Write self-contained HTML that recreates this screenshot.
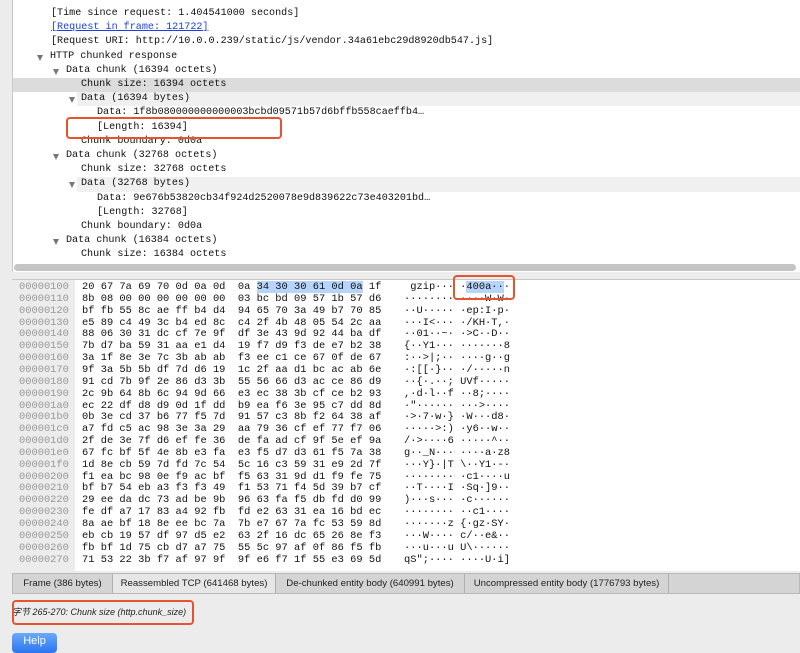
<!DOCTYPE html>
<html><head><meta charset="utf-8"><style>
*{margin:0;padding:0;box-sizing:border-box}
body{width:800px;height:646px;background:#ececec;position:relative;overflow:hidden;font-family:"Liberation Sans","Noto Sans CJK SC",sans-serif}
#tree{position:absolute;left:12px;top:0;width:788px;height:272px;background:#fff;border-left:1px solid #c8c8c8}
.r{position:absolute;left:0;width:788px;height:14.2px;font:10.1px/14.2px "Liberation Mono",monospace;color:#111;white-space:pre}
.r span.t{position:absolute;top:0}
.tri{position:absolute;top:5px;width:0;height:0;border-left:3.5px solid transparent;border-right:3.5px solid transparent;border-top:6px solid #777}
a{color:#1a3fe0;text-decoration:underline}
#hs{position:absolute;left:14px;top:264px;width:782px;height:7px;background:#c4c4c4;border-radius:4px}
#hex{position:absolute;left:12px;top:279px;width:788px;height:292px;background:#fff;border-top:1px solid #c8c8c8}
#off{position:absolute;left:0;top:0;width:63px;height:292px;background:#ececec}
.h{position:absolute;left:0;height:11.85px;font:10.4px/11.85px "Liberation Mono",monospace;white-space:pre;color:#111}
.h .o{position:absolute;left:7px;color:#999}
.h .x{position:absolute;left:70px}
.h .a{position:absolute;left:392px}
.hl{background:#b7d5fb}
.box{position:absolute;border:2px solid #e6532f;border-radius:4px}
#tabs{position:absolute;left:12px;top:573px;width:788px;height:21px;background:#d4d4d4;border:1px solid #b8b8b8}
.tab{position:absolute;top:0;height:19px;font-size:9.6px;line-height:19px;text-align:center;color:#222;border-right:1px solid #b0b0b0;white-space:nowrap;overflow:hidden}
#help{position:absolute;left:12px;top:633px;width:45px;height:20px;border-radius:4px;background:linear-gradient(#6aa9fb,#2a74ee);color:#fff;font-size:11px;text-align:center;line-height:17px}
</style></head><body>
<div id="tree">
<div class="r" style="top:7px"><span class="t" style="left:38px">[Time since request: 1.404541000 seconds]</span></div>
<div class="r" style="top:21.2px"><span class="t" style="left:38px"><a>[Request in frame: 121722]</a></span></div>
<div class="r" style="top:35.4px"><span class="t" style="left:38px">[Request URI: http://10.0.0.239/static/js/vendor.34a61ebc29d8920db547.js]</span></div>
<div class="r" style="top:49.6px"><i class="tri" style="left:24px"></i><span class="t" style="left:37px">HTTP chunked response</span></div>
<div class="r" style="top:63.8px"><i class="tri" style="left:40px"></i><span class="t" style="left:53px">Data chunk (16394 octets)</span></div>
<div class="r" style="top:78px;background:#dcdcdc"><span class="t" style="left:68px">Chunk size: 16394 octets</span></div>
<div class="r" style="top:92.2px"><div style="position:absolute;left:64px;top:0;width:724px;height:14.2px;background:#f0f0f0"></div><i class="tri" style="left:56px"></i><span class="t" style="left:68px">Data (16394 bytes)</span></div>
<div class="r" style="top:106.4px"><span class="t" style="left:84px">Data: 1f8b080000000000003bcbd09571b57d6bffb558caeffb4…</span></div>
<div class="r" style="top:120.6px"><span class="t" style="left:84px">[Length: 16394]</span></div>
<div class="r" style="top:134.8px"><span class="t" style="left:68px">Chunk boundary: 0d0a</span></div>
<div class="r" style="top:149px"><i class="tri" style="left:40px"></i><span class="t" style="left:53px">Data chunk (32768 octets)</span></div>
<div class="r" style="top:163.2px"><span class="t" style="left:68px">Chunk size: 32768 octets</span></div>
<div class="r" style="top:177.4px"><div style="position:absolute;left:64px;top:0;width:724px;height:14.2px;background:#f0f0f0"></div><i class="tri" style="left:56px"></i><span class="t" style="left:68px">Data (32768 bytes)</span></div>
<div class="r" style="top:191.6px"><span class="t" style="left:84px">Data: 9e676b53820cb34f924d2520078e9d839622c73e403201bd…</span></div>
<div class="r" style="top:205.8px"><span class="t" style="left:84px">[Length: 32768]</span></div>
<div class="r" style="top:220px"><span class="t" style="left:68px">Chunk boundary: 0d0a</span></div>
<div class="r" style="top:234.2px"><i class="tri" style="left:40px"></i><span class="t" style="left:53px">Data chunk (16384 octets)</span></div>
<div class="r" style="top:248.4px"><span class="t" style="left:68px">Chunk size: 16384 octets</span></div>
</div>
<div id="hs"></div>
<div id="hex"><div id="off"></div>
<div class="h" style="top:2px"><span class="o">00000100</span><span class="x">20 67 7a 69 70 0d 0a 0d  0a <span class="hl">34 30 30 61 0d 0a</span> 1f</span><span class="a"> gzip··· ·<span class="hl">400a··</span>·</span></div>
<div class="h" style="top:13.85px"><span class="o">00000110</span><span class="x">8b 08 00 00 00 00 00 00  03 bc bd 09 57 1b 57 d6</span><span class="a">········ ····W·W·</span></div>
<div class="h" style="top:25.7px"><span class="o">00000120</span><span class="x">bf fb 55 8c ae ff b4 d4  94 65 70 3a 49 b7 70 85</span><span class="a">··U····· ·ep:I·p·</span></div>
<div class="h" style="top:37.55px"><span class="o">00000130</span><span class="x">e5 89 c4 49 3c b4 ed 8c  c4 2f 4b 48 05 54 2c aa</span><span class="a">···I<··· ·/KH·T,·</span></div>
<div class="h" style="top:49.4px"><span class="o">00000140</span><span class="x">88 06 30 31 dc cf 7e 9f  df 3e 43 9d 92 44 ba df</span><span class="a">··01··~· ·>C··D··</span></div>
<div class="h" style="top:61.25px"><span class="o">00000150</span><span class="x">7b d7 ba 59 31 aa e1 d4  19 f7 d9 f3 de e7 b2 38</span><span class="a">{··Y1··· ·······8</span></div>
<div class="h" style="top:73.1px"><span class="o">00000160</span><span class="x">3a 1f 8e 3e 7c 3b ab ab  f3 ee c1 ce 67 0f de 67</span><span class="a">:··>|;·· ····g··g</span></div>
<div class="h" style="top:84.95px"><span class="o">00000170</span><span class="x">9f 3a 5b 5b df 7d d6 19  1c 2f aa d1 bc ac ab 6e</span><span class="a">·:[[·}·· ·/·····n</span></div>
<div class="h" style="top:96.8px"><span class="o">00000180</span><span class="x">91 cd 7b 9f 2e 86 d3 3b  55 56 66 d3 ac ce 86 d9</span><span class="a">··{·.··; UVf·····</span></div>
<div class="h" style="top:108.65px"><span class="o">00000190</span><span class="x">2c 9b 64 8b 6c 94 9d 66  e3 ec 38 3b cf ce b2 93</span><span class="a">,·d·l··f ··8;····</span></div>
<div class="h" style="top:120.5px"><span class="o">000001a0</span><span class="x">ec 22 df d8 d9 0d 1f dd  b9 ea f6 3e 95 c7 dd 8d</span><span class="a">·"······ ···>····</span></div>
<div class="h" style="top:132.35px"><span class="o">000001b0</span><span class="x">0b 3e cd 37 b6 77 f5 7d  91 57 c3 8b f2 64 38 af</span><span class="a">·>·7·w·} ·W···d8·</span></div>
<div class="h" style="top:144.2px"><span class="o">000001c0</span><span class="x">a7 fd c5 ac 98 3e 3a 29  aa 79 36 cf ef 77 f7 06</span><span class="a">·····>:) ·y6··w··</span></div>
<div class="h" style="top:156.05px"><span class="o">000001d0</span><span class="x">2f de 3e 7f d6 ef fe 36  de fa ad cf 9f 5e ef 9a</span><span class="a">/·>····6 ·····^··</span></div>
<div class="h" style="top:167.9px"><span class="o">000001e0</span><span class="x">67 fc bf 5f 4e 8b e3 fa  e3 f5 d7 d3 61 f5 7a 38</span><span class="a">g··_N··· ····a·z8</span></div>
<div class="h" style="top:179.75px"><span class="o">000001f0</span><span class="x">1d 8e cb 59 7d fd 7c 54  5c 16 c3 59 31 e9 2d 7f</span><span class="a">···Y}·|T \··Y1·-·</span></div>
<div class="h" style="top:191.6px"><span class="o">00000200</span><span class="x">f1 ea bc 98 0e f9 ac bf  f5 63 31 9d d1 f9 fe 75</span><span class="a">········ ·c1····u</span></div>
<div class="h" style="top:203.45px"><span class="o">00000210</span><span class="x">bf b7 54 eb a3 f3 f3 49  f1 53 71 f4 5d 39 b7 cf</span><span class="a">··T····I ·Sq·]9··</span></div>
<div class="h" style="top:215.3px"><span class="o">00000220</span><span class="x">29 ee da dc 73 ad be 9b  96 63 fa f5 db fd d0 99</span><span class="a">)···s··· ·c······</span></div>
<div class="h" style="top:227.15px"><span class="o">00000230</span><span class="x">fe df a7 17 83 a4 92 fb  fd e2 63 31 ea 16 bd ec</span><span class="a">········ ··c1····</span></div>
<div class="h" style="top:239px"><span class="o">00000240</span><span class="x">8a ae bf 18 8e ee bc 7a  7b e7 67 7a fc 53 59 8d</span><span class="a">·······z {·gz·SY·</span></div>
<div class="h" style="top:250.85px"><span class="o">00000250</span><span class="x">eb cb 19 57 df 97 d5 e2  63 2f 16 dc 65 26 8e f3</span><span class="a">···W···· c/··e&amp;··</span></div>
<div class="h" style="top:262.7px"><span class="o">00000260</span><span class="x">fb bf 1d 75 cb d7 a7 75  55 5c 97 af 0f 86 f5 fb</span><span class="a">···u···u U\······</span></div>
<div class="h" style="top:274.55px"><span class="o">00000270</span><span class="x">71 53 22 3b f7 af 97 9f  9f e6 f7 1f 55 e3 69 5d</span><span class="a">qS";···· ····U·i]</span></div>
</div>
<div class="box" style="left:66px;top:117px;width:216px;height:22px"></div>
<div class="box" style="left:453px;top:275px;width:62px;height:25px"></div>
<div id="tabs">
<div class="tab" style="left:0;width:100px">Frame (386 bytes)</div>
<div class="tab" style="left:100px;width:163px;background:#e6e6e6">Reassembled TCP (641468 bytes)</div>
<div class="tab" style="left:263px;width:189px">De-chunked entity body (640991 bytes)</div>
<div class="tab" style="left:452px;width:204px">Uncompressed entity body (1776793 bytes)</div>
</div>
<div style="position:absolute;left:12px;top:605px;font-size:9px;font-style:italic;color:#222;white-space:nowrap">字节 265-270: Chunk size (http.chunk_size)</div>
<div class="box" style="left:12px;top:600px;width:182px;height:25px"></div>
<div id="help">Help</div>
</body></html>
